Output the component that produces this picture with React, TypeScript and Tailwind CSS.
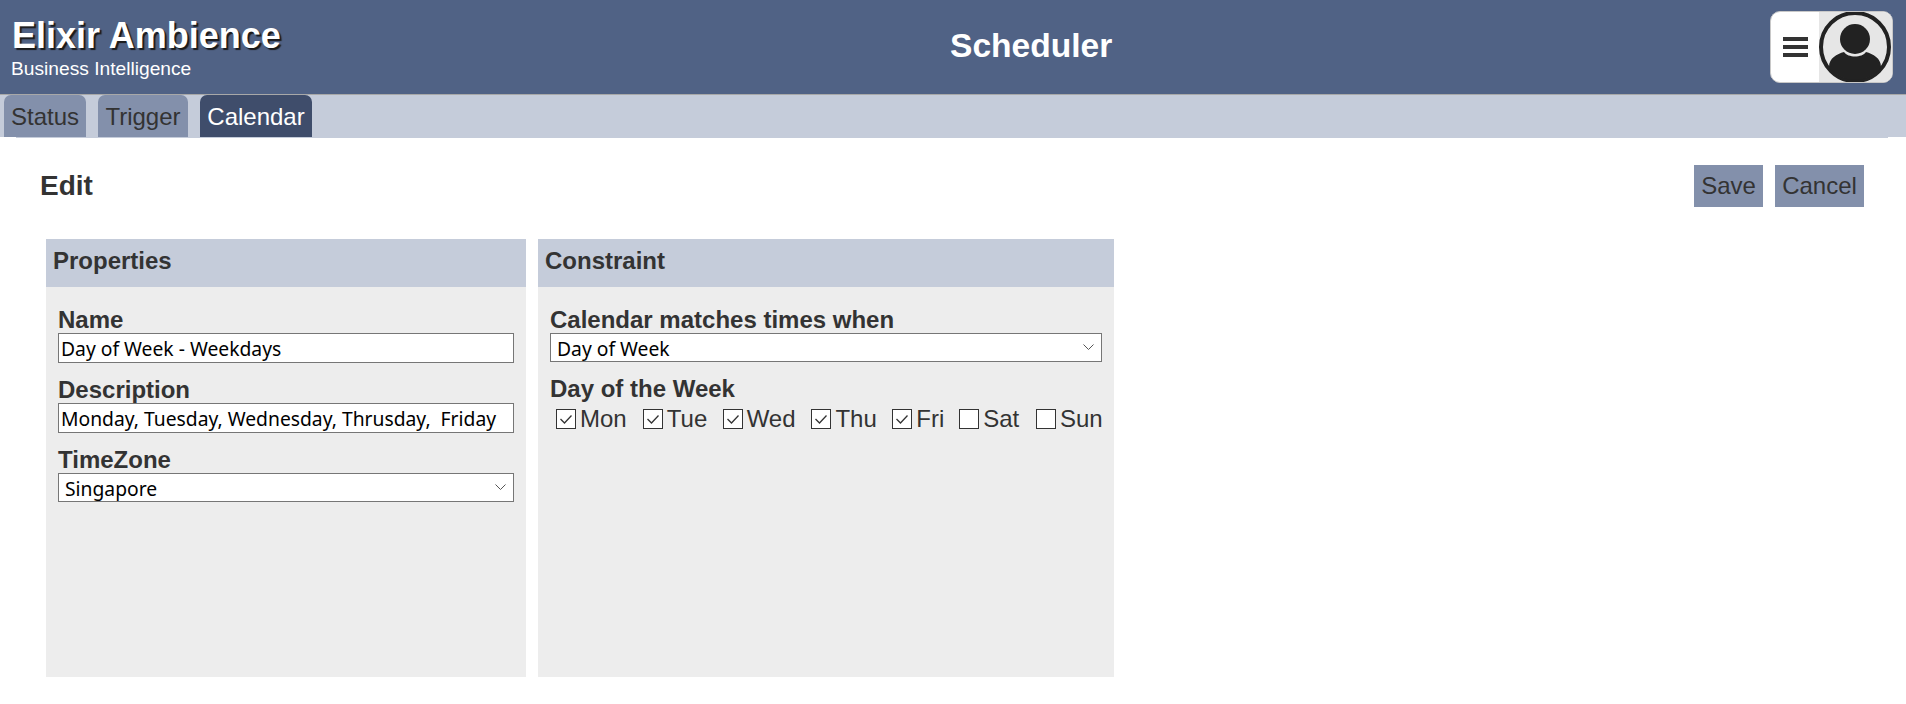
import React from "react";

const sans = "font-['Liberation_Sans',Arial,sans-serif]";

function Tab({ label, width, active }: { label: string; width: string; active?: boolean }) {
  return (
    <div
      className={`${width} h-[42px] text-center rounded-t-[7px] text-[24px] leading-[44px] ${
        active ? "bg-[#3f4d6b] text-white" : "bg-[#8390ab] text-[#333333]"
      }`}
    >
      {label}
    </div>
  );
}

function Chevron() {
  return (
    <svg
      className="absolute right-[8px] top-[11px]"
      width="11"
      height="7"
      viewBox="0 0 11 7"
      fill="none"
      stroke="#555555"
      strokeWidth="1"
    >
      <path d="M0.5 0.5 L5.5 5.5 L10.5 0.5" />
    </svg>
  );
}

function Label({ text }: { text: string }) {
  return <div className="text-[24px] font-bold leading-[28px] h-[27px] text-[#333333]">{text}</div>;
}

function Field({ label, value }: { label: string; value: string }) {
  return (
    <div className="mb-[13px]">
      <Label text={label} />
      <input
        readOnly
        value={value}
        className="block w-full h-[30px] border border-[#767676] bg-white px-[2px] text-[19.3px] text-black font-['Noto_Sans',sans-serif] outline-none"
      />
    </div>
  );
}

function Select({ label, value, className }: { label: string; value: string; className?: string }) {
  return (
    <div className={className}>
      <Label text={label} />
      <div className="relative h-[29px]">
        <select
          defaultValue={value}
          className="block w-full h-[29px] appearance-none border border-[#767676] bg-white pl-[6px] pt-[1px] text-[19.3px] text-black font-['Noto_Sans',sans-serif] outline-none"
        >
          <option>{value}</option>
        </select>
        <Chevron />
      </div>
    </div>
  );
}

function Day({ label, checked, width }: { label: string; checked: boolean; width: string }) {
  return (
    <label className={`flex items-center ${width}`}>
      <span className="relative w-[20px] h-[20px] mr-[4px] shrink-0">
        <input
          type="checkbox"
          readOnly
          checked={checked}
          className="appearance-none block w-[20px] h-[20px] border border-[#333333] bg-white"
        />
        {checked && (
          <svg
            className="absolute left-0 top-0"
            width="20"
            height="20"
            viewBox="0 0 20 20"
            fill="none"
            stroke="#333333"
            strokeWidth="1.3"
          >
            <path d="M4.5 10 L8.5 14 L15.5 6.5" />
          </svg>
        )}
      </span>
      <span className="text-[24px] leading-[28px] text-[#333333]">{label}</span>
    </label>
  );
}

function Panel({ title, width, children }: { title: string; width: string; children: React.ReactNode }) {
  return (
    <section className={`${width} h-[438px] bg-[#ededed] flex flex-col`}>
      <h2 className="h-[48px] bg-[#c5ccda] px-[7px] text-[24px] font-bold leading-[44px] text-[#333333]">{title}</h2>
      <div className="pt-[19px] px-[12px]">{children}</div>
    </section>
  );
}

export default function App() {
  return (
    <div className={`${sans} w-[1906px] h-[704px] bg-white overflow-hidden`}>
      <header className="relative h-[95px] bg-[#506285] border-b border-[#a8a8a8] flex items-start justify-between">
        <div className="pl-[12px] pt-[15px] text-white">
          <div className="text-[36px] font-bold leading-[42px] [text-shadow:2px_2px_1px_#1a1a1a]">Elixir Ambience</div>
          <div className="text-[19.2px] leading-[20px] mt-[2px] -ml-[1px]">Business Intelligence</div>
        </div>
        <div className="absolute left-[950px] top-[26px] text-[33.6px] font-bold leading-[40px] text-white">Scheduler</div>
        <div className="mt-[11px] mr-[13px] w-[123px] h-[72px] rounded-[10px] bg-white border border-[#c8c8c8] overflow-hidden flex">
          <div className="w-[48px] flex flex-col items-center justify-center gap-[4px] pl-[1px]">
            <span className="block w-[25px] h-[4px] bg-[#333333]" />
            <span className="block w-[25px] h-[4px] bg-[#333333]" />
            <span className="block w-[25px] h-[4px] bg-[#333333]" />
          </div>
          <div className="flex-1 bg-[#e6e6e6] flex items-center justify-start">
            <svg width="72" height="72" viewBox="0 0 72 72">
              <defs>
                <clipPath id="avatarClip">
                  <circle cx="36" cy="36" r="33" />
                </clipPath>
              </defs>
              <circle cx="36" cy="36" r="34" fill="#e6e6e6" stroke="#222222" strokeWidth="4" />
              <circle cx="36" cy="28" r="15" fill="#222222" />
              <path
                d="M10 72 V56 C10 47 18 43 25 41 C29 47 43 47 47 41 C54 43 62 47 62 56 V72 Z"
                fill="#222222"
                clipPath="url(#avatarClip)"
              />
            </svg>
          </div>
        </div>
      </header>

      <nav className="h-[42px] bg-[#c5ccda] pl-[4px] flex gap-[12px] items-start">
        <Tab label="Status" width="w-[82px]" />
        <Tab label="Trigger" width="w-[90px]" />
        <Tab label="Calendar" width="w-[112px]" active />
      </nav>
      <div className="h-[1px] ml-[16px] mr-[18px] bg-[#c5ccda]" />

      <main className="relative">
        <div className="flex items-start justify-between pl-[40px] pr-[42px] pt-[27px] h-[101px]">
          <h1 className="text-[28px] font-bold leading-[33px] mt-[4px] text-[#333333]">Edit</h1>
          <div className="flex gap-[12px]">
            <button className="h-[42px] w-[69px] bg-[#8390ab] text-[24px] text-[#333333]">Save</button>
            <button className="h-[42px] w-[89px] bg-[#8390ab] text-[24px] text-[#333333]">Cancel</button>
          </div>
        </div>
        <div className="flex gap-[12px] pl-[46px]">
          <Panel title="Properties" width="w-[480px]">
            <Field label="Name" value="Day of Week - Weekdays" />
            <Field label="Description" value="Monday, Tuesday, Wednesday, Thrusday,  Friday" />
            <Select label="TimeZone" value="Singapore" />
          </Panel>
          <Panel title="Constraint" width="w-[576px]">
            <Select label="Calendar matches times when" value="Day of Week" className="mb-[13px]" />
            <Label text="Day of the Week" />
            <div className="flex pl-[6px] h-[33px] items-center">
              <Day label="Mon" checked width="w-[87px]" />
              <Day label="Tue" checked width="w-[80px]" />
              <Day label="Wed" checked width="w-[89px]" />
              <Day label="Thu" checked width="w-[81px]" />
              <Day label="Fri" checked width="w-[67px]" />
              <Day label="Sat" checked={false} width="w-[77px]" />
              <Day label="Sun" checked={false} width="w-[66px]" />
            </div>
          </Panel>
        </div>
      </main>
    </div>
  );
}
